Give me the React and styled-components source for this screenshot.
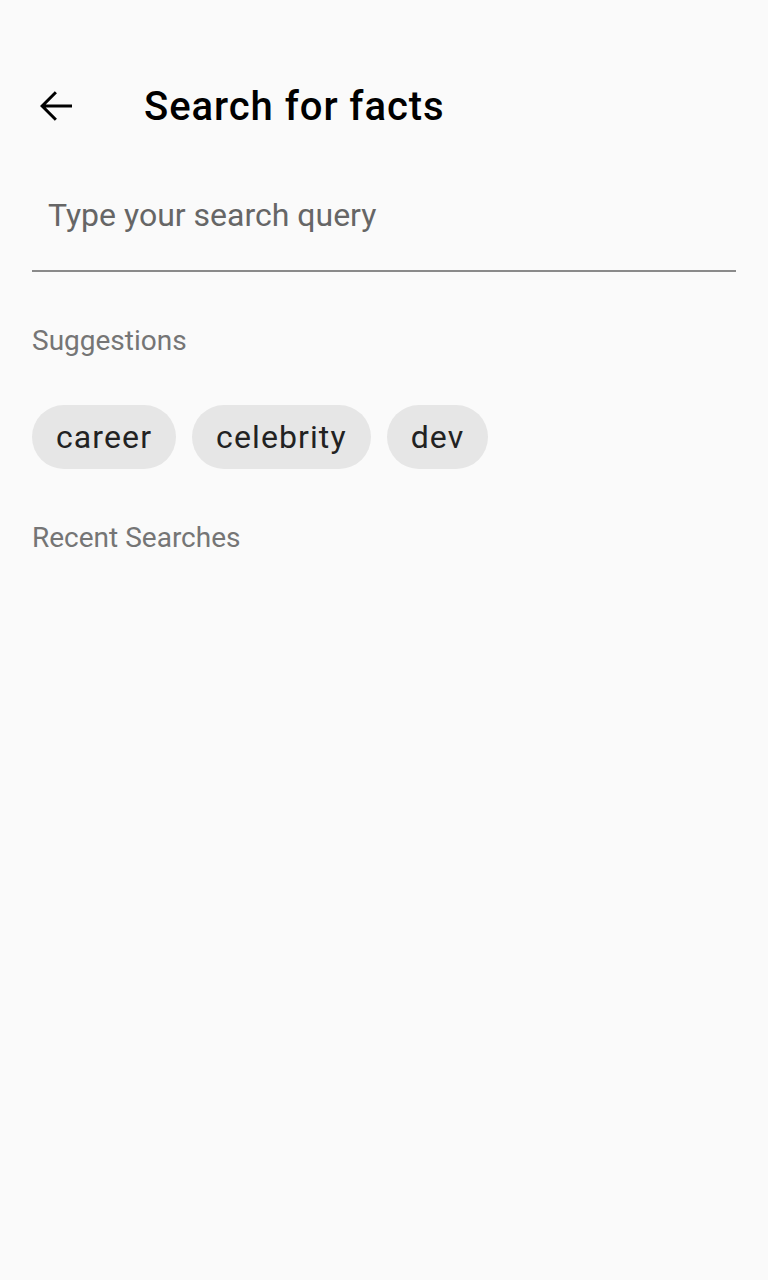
import React from "react";
import styled, { createGlobalStyle } from "styled-components";

const GlobalStyle = createGlobalStyle`
  html, body { margin: 0; padding: 0; background: #fafafa; }
  body { font-family: Roboto, "Noto Sans", sans-serif; }
`;

const Screen = styled.div` min-height: 1280px; background: #fafafa; display: flex; flex-direction: column; `;
const Toolbar = styled.div` height: 112px; margin-top: 50px; display: flex; align-items: center; padding: 0 32px; box-sizing: border-box; `;
const BackButton = styled.button` width: 48px; height: 48px; border: 0; background: none; padding: 0; display: flex; align-items: center; justify-content: center; margin-right: 64px; `;
const Title = styled.h1` margin: 0; font-size: 40px; font-weight: 500; color: #000; letter-spacing: 0.95px; `;
const Body = styled.div` padding: 0 32px; display: flex; flex-direction: column; margin-top: -2px; `;
const SearchField = styled.div` height: 110px; border-bottom: 2px solid #8a8a8a; display: flex; align-items: center; padding: 0 16px; `;
const Input = styled.input` flex: 1; border: 0; background: transparent; outline: none; font-family: Roboto, sans-serif; font-size: 32px; color: #222; padding: 0;
  &::placeholder { color: #666; } `;
const SectionLabel = styled.div` font-size: 28px; color: #757575; margin-top: ${(p) => p.$top}px; `;
const ChipRow = styled.div` display: flex; gap: 16px; margin-top: 48px; `;
const Chip = styled.div` height: 64px; border-radius: 32px; background: #e6e6e6; color: #222; font-size: 32px; padding: 0 24px; display: flex; align-items: center; letter-spacing: 1.1px; `;

export default function App() {
  return (
    <>
      <GlobalStyle />
      <Screen>
        <Toolbar>
          <BackButton aria-label="back">
            <svg width="48" height="48" viewBox="0 0 24 24">
              <path d="M20 11.25H6.87l5.6-5.6L11.4 4.6 4 12l7.4 7.4 1.07-1.05-5.6-5.6H20v-1.5z" fill="#000" />
            </svg>
          </BackButton>
          <Title>Search for facts</Title>
        </Toolbar>
        <Body>
          <SearchField>
            <Input placeholder="Type your search query" />
          </SearchField>
          <SectionLabel $top={52}>Suggestions</SectionLabel>
          <ChipRow>
            {["career", "celebrity", "dev"].map((c) => (
              <Chip key={c}>{c}</Chip>
            ))}
          </ChipRow>
          <SectionLabel $top={52}>Recent Searches</SectionLabel>
        </Body>
      </Screen>
    </>
  );
}
